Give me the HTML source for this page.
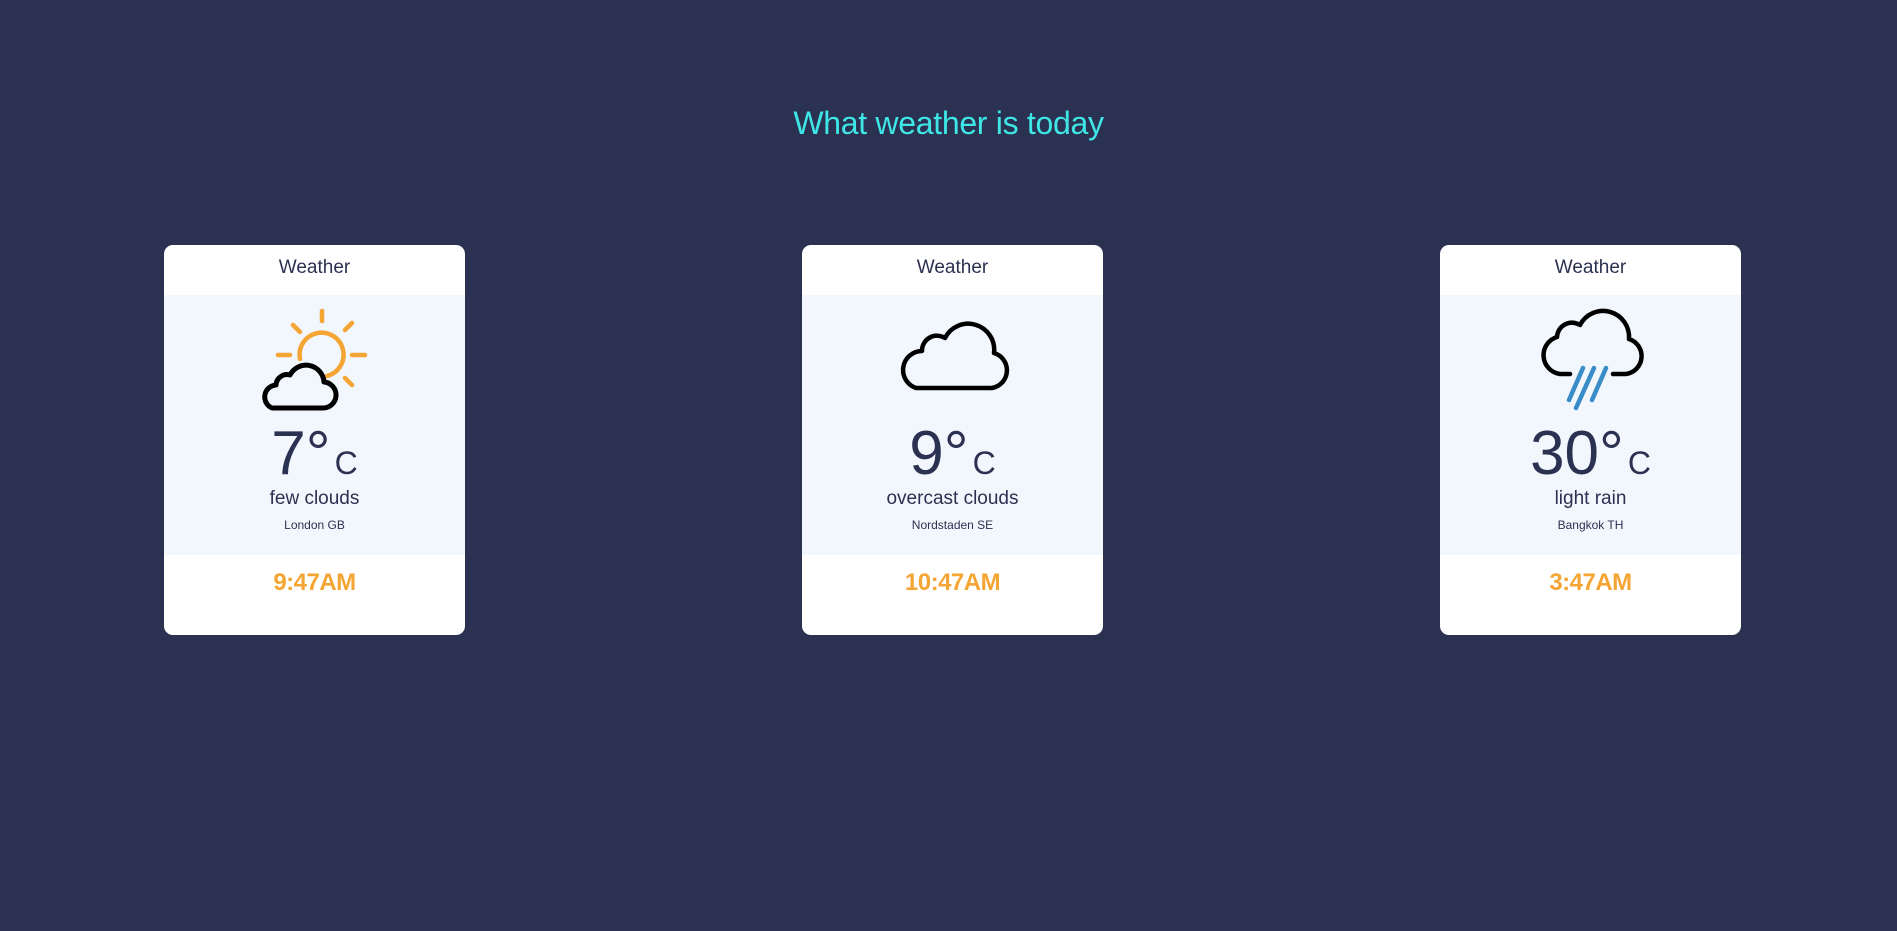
<!DOCTYPE html>
<html><head><meta charset="utf-8"><style>
html,body{margin:0;padding:0;width:1897px;height:931px;background:#2b3150;overflow:hidden;font-family:"Liberation Sans",sans-serif;}
h1{position:absolute;left:0;width:1897px;top:103px;margin:0;text-align:center;font-size:32px;font-weight:normal;color:#3ee6e6;line-height:40px;letter-spacing:-0.3px}
.card{position:absolute;top:245px;width:301px;height:390px;background:#fff;border-radius:9px;overflow:hidden}
.hd{position:absolute;top:0;left:0;right:0;height:50px;text-align:center;line-height:46px;font-size:19px;color:#2b3150}
.bd{position:absolute;top:50px;left:0;right:0;height:260px;background:#f2f7fe}
.ic{position:absolute;left:0;top:0}
.tp{position:absolute;left:0;right:0;top:128px;text-align:center;color:#2b3150;line-height:1;white-space:nowrap}
.tp .n{font-size:62px}
.tp .c{font-size:32px;margin-left:4px}
.ds{position:absolute;left:0;right:0;top:193px;text-align:center;font-size:19px;color:#2b3150}
.ct{position:absolute;left:0;right:0;top:223px;text-align:center;font-size:12px;color:#2b3150}
.tm{position:absolute;left:0;right:0;top:324px;text-align:center;font-size:24px;font-weight:bold;color:#f4a533;letter-spacing:-0.5px}
</style></head><body>
<h1>What weather is today</h1>

<div class="card" style="left:164px">
 <div class="hd">Weather</div>
 <div class="bd">
  <svg class="ic" width="301" height="260" viewBox="0 0 301 260">
   <g stroke="#f4a533" stroke-width="4.5" stroke-linecap="round" fill="none">
    <path d="M136,64 A22,22 0 1 1 163,81"/>
    <line x1="158" y1="16" x2="158" y2="26"/>
    <line x1="188" y1="60" x2="201" y2="60"/>
    <line x1="114" y1="60" x2="126" y2="60"/>
    <line x1="181" y1="35" x2="188" y2="28"/>
    <line x1="181" y1="83" x2="188" y2="90"/>
    <line x1="129" y1="30" x2="136" y2="37"/>
   </g>
   <path d="M108,113 H158 A13,13 0 0 0 160,87 A18,18 0 0 0 126,80 A11,11 0 0 0 112,90 A12,12 0 0 0 108,113 Z" fill="none" stroke="#000" stroke-width="5" stroke-linejoin="round"/>
  </svg>
  <div class="tp"><span class="n">7°</span><span class="c">C</span></div>
  <div class="ds">few clouds</div>
  <div class="ct">London GB</div>
 </div>
 <div class="tm">9:47AM</div>
</div>

<div class="card" style="left:802px">
 <div class="hd">Weather</div>
 <div class="bd">
  <svg class="ic" width="301" height="260" viewBox="0 0 301 260">
   <path d="M114,93 H190 A18,18 0 0 0 192,58 A26,26 0 0 0 143,43 A15,15 0 0 0 120,56 A19,19 0 0 0 114,93 Z" fill="none" stroke="#000" stroke-width="4.5" stroke-linejoin="round"/>
  </svg>
  <div class="tp"><span class="n">9°</span><span class="c">C</span></div>
  <div class="ds">overcast clouds</div>
  <div class="ct">Nordstaden SE</div>
 </div>
 <div class="tm">10:47AM</div>
</div>

<div class="card" style="left:1440px">
 <div class="hd">Weather</div>
 <div class="bd">
  <svg class="ic" width="301" height="260" viewBox="0 0 301 260">
   <path d="M130,79 H120 A19,19 0 0 1 117,42 A15,15 0 0 1 140,30 A26,26 0 0 1 189,44 A18,18 0 0 1 186,79 H173" fill="none" stroke="#000" stroke-width="4.5" stroke-linecap="round" stroke-linejoin="round"/>
   <g stroke="#3a8cc8" stroke-width="4.5" stroke-linecap="round">
    <line x1="143" y1="73" x2="129" y2="105"/>
    <line x1="154" y1="73" x2="136" y2="113"/>
    <line x1="166" y1="73" x2="152" y2="105"/>
   </g>
  </svg>
  <div class="tp"><span class="n">30°</span><span class="c">C</span></div>
  <div class="ds">light rain</div>
  <div class="ct">Bangkok TH</div>
 </div>
 <div class="tm">3:47AM</div>
</div>
</body></html>
